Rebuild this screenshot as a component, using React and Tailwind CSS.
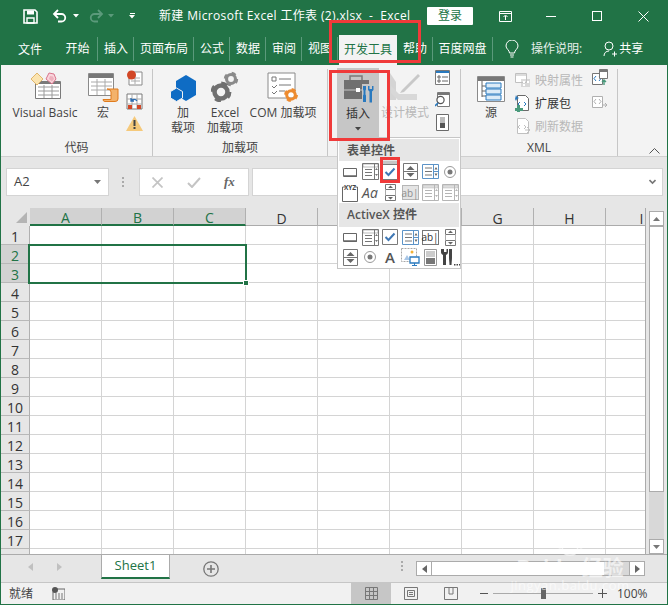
const columns = ["A", "B", "C", "D", "E", "F", "G", "H", "I"];
const rows = Array.from({ length: 18 }, (_, i) => i + 1);

const tabs = [
  ["开始", "w-[42px] pl-[2px]"],
  ["插入", "w-[36px] pl-[1px]"],
  ["页面布局", "w-[60px] pl-[1px]"],
  ["公式", "w-[36px] pl-[1px]"],
  ["数据", "w-[36px] pl-[1px]"],
  ["审阅", "w-[36px] pl-[1px]"],
  ["视图", "w-[36px] pl-[1px]"],
];

function Svg({ w, h, children, className }) {
  return (
    <svg width={w} height={h} viewBox={`0 0 ${w} ${h}`} fill="none" className={`block shrink-0 ${className || ""}`}>
      {children}
    </svg>
  );
}

// title bar
function SaveIcon() {
  return (
    <Svg w={15} h={15}>
      <path d="M1 1h11l2 2v11H1z" stroke="#fff" strokeWidth="1.6" />
      <path d="M4 1.500h7v4H4z" fill="#fff" />
      <path d="M4 9h7v5H4z" stroke="#fff" strokeWidth="1.400" />
    </Svg>
  );
}
function UndoIcon({ color, flip }) {
  return (
    <Svg w={15} h={14} className={flip ? "-scale-x-100" : ""}>
      <path d="M2 5h7.500a3.700 3.700 0 0 1 0 7.500H6" stroke={color} strokeWidth="1.800" />
      <path d="M6 1L2 5l4 4" stroke={color} strokeWidth="1.800" />
    </Svg>
  );
}
function Caret({ color }) {
  return (
    <Svg w={6} h={4}>
      <path d="M0 0h6L3 3.500z" fill={color} />
    </Svg>
  );
}

// ribbon
function VbIcon() {
  return (
    <Svg w={31} h={30}>
      <path d="M5.500 9.500h25v17h-25z" fill="#fff" stroke="#7a7a7a" />
      <path d="M6 9h24v3H6z" fill="#7a7a7a" />
      <path d="M8 15h21M8 19h21M8 23h21M14 13v13M22 13v13" stroke="#9a9a9a" />
      <path d="M7 1l6 6-6 6-6-6z" fill="#fbe4b0" stroke="#e0b66c" />
      <path d="M19 1l5 1 2 5-4 5-6-5z" fill="#f9d5dc" stroke="#d9758c" />
      <path d="M20 4l3 .5 1 2.500-2 2.500-3-2.500z" fill="#eeb0bd" />
    </Svg>
  );
}
function MacroIcon() {
  return (
    <Svg w={31} h={29}>
      <path d="M.5.5h25v22H.5z" fill="#fff" stroke="#8a8a8a" />
      <path d="M1 1h24v4H1z" fill="#777" />
      <path d="M3 9h21M3 13h21M3 17h21M9 6v16M17 6v16" stroke="#aaa" />
      <path d="M19 16h11v10q0 2.500-3 2.500H17q-2 0-2-2h8V19q0-3-4-3z" fill="#f3b26b" stroke="#e07b1d" />
    </Svg>
  );
}
function SmallRecord() {
  return (
    <Svg w={17} h={16}>
      <path d="M3 2h13v13H3z" fill="#fff" stroke="#8a8a8a" />
      <path d="M5 8h9M5 11h9M9 5v9" stroke="#aaa" />
      <circle cx="5.500" cy="5" r="4.500" fill="#d24726" />
    </Svg>
  );
}
function SmallRelative() {
  return (
    <Svg w={17} h={17}>
      <path d="M1 1h15v15H1z" fill="#fff" stroke="#7a7a7a" />
      <path d="M1 6h15M1 11h15M6 1v15M11 1v15" stroke="#aaa" />
      <path d="M11 8a3.500 3.500 0 0 0-6 0M5 5v3h3" stroke="#2b6cb0" strokeWidth="1.300" />
      <path d="M2 12h4v4H2zM11 12h4v4h-4z" fill="#d24726" />
    </Svg>
  );
}
function SmallWarn() {
  return (
    <Svg w={17} h={15}>
      <path d="M8.500 0L17 15H0z" fill="#f5c97b" />
      <path d="M7.500 4h2v6h-2zM7.500 11h2v2h-2z" fill="#444" />
    </Svg>
  );
}
function AddinIcon() {
  return (
    <Svg w={27} h={27}>
      <path d="M16 0l10 6v14l-10 6-10-6V6z" fill="#0f6cc4" />
      <path d="M6.500 13l6 3.500v6.500l-6 3.500-6-3.500v-6.500z" fill="#0f6cc4" stroke="#f3f3f3" />
    </Svg>
  );
}
function Gear({ x, y, r, color }) {
  return (
    <g transform={`translate(${x} ${y})`}>
      <circle r={r * 0.72} stroke={color} strokeWidth={r * 0.5} />
      <circle r={r} stroke={color} strokeWidth={r * 0.32} strokeDasharray={`${r * 0.7} ${r * 0.87}`} />
    </g>
  );
}
function GearsIcon() {
  return (
    <Svg w={28} h={31}>
      <Gear x={20} y={8} r={6.200} color="#8a8a8a" />
      <Gear x={10} y={21} r={9} color="#707070" />
    </Svg>
  );
}
function ComIcon() {
  return (
    <Svg w={32} h={30}>
      <path d="M1 1h27v25H1z" fill="#fff" stroke="#8a8a8a" />
      <path d="M5 5h4v4H5z" stroke="#777" />
      <path d="M12 7h12M12 13h12M12 19h6" stroke="#777" />
      <path d="M5 14l2 2 3-3M5 20l2 2 3-3" stroke="#777" />
      <Gear x={24} y={23} r={6} color="#ed8b2f" />
    </Svg>
  );
}
function ToolboxIcon() {
  return (
    <Svg w={31} h={28}>
      <path d="M6 5V1h12v4" stroke="#7a7a7a" strokeWidth="1.500" />
      <path d="M0 5h25v19H0z" fill="#707070" />
      <path d="M0 15h25" stroke="#c6c6c6" />
      <path d="M12 13h4v4h-4z" fill="#fff" />
      <path d="M18 9h7v15h-7z" fill="#c6c6c6" />
      <path d="M19 11h3v3.500l-.5 1v4l.5 1v6.500h-3v-6.500l.5-1v-4l-.5-1z" fill="#2a7abf" />
      <path d="M24 11h1.500v3h2.500v-3h1.500v4l-1.500 1.500v11h-2.500v-11L24 15z" fill="#2a7abf" />
    </Svg>
  );
}
function DesignIcon() {
  return (
    <Svg w={32} h={30}>
      <path d="M1 1v27h6V10z" fill="#d4d4d4" />
      <path d="M2 21l7 7H28v-6H10L2 14z" fill="#d8d8d8" />
      <path d="M13 18L29 2l2 2-16 16-4 1z" fill="#c8c8c8" />
    </Svg>
  );
}
function SmallProps() {
  return (
    <Svg w={15} h={15}>
      <path d="M.5.5h14v14H.5z" fill="#fff" stroke="#7a7a7a" />
      <path d="M1 1h13v2H1z" fill="#2a7abf" />
      <path d="M3 6h2v2H3zM3 10h2v2H3z" stroke="#666" />
      <path d="M7 7h6M7 11h6" stroke="#666" />
    </Svg>
  );
}
function SmallView() {
  return (
    <Svg w={15} h={15}>
      <path d="M2.500.5h12v14h-12z" fill="#fff" stroke="#7a7a7a" />
      <path d="M3 1h11v2H3z" fill="#777" />
      <circle cx="5.500" cy="8" r="3.600" fill="#fff" stroke="#555" strokeWidth="1.200" />
      <path d="M3 11l-3 3" stroke="#2a7abf" strokeWidth="1.600" />
    </Svg>
  );
}
function SmallDialog() {
  return (
    <Svg w={15} h={17}>
      <path d="M1.500.5h12v16h-12z" fill="#fff" stroke="#6a6a6a" />
      <path d="M5 3h5v6H5z" fill="#bbb" />
      <path d="M5 9h5v5H5z" fill="#555" />
    </Svg>
  );
}
function SourceIcon() {
  return (
    <Svg w={28} h={26}>
      <path d="M.5.5h27v25H.5z" fill="#fff" stroke="#8a8a8a" />
      <path d="M1 1h26v4H1z" fill="#777" />
      <path d="M5 5v16M5 10h4M5 15h4M5 20h4" stroke="#666" />
      <path d="M9 7h15v5H9zM9 13h15v5H9zM9 19h15v5H9z" fill="#dcebf7" stroke="#2a7abf" />
    </Svg>
  );
}
function XmlSmall({ active, kind }) {
  const c = active ? "#6a6a6a" : "#c0c0c0";
  const b = active ? "#2a7abf" : "#c0c0c0";
  if (kind === "map")
    return (
      <Svg w={16} h={15}>
        <path d="M.5.5h11v9H.5z" fill="#fff" stroke={c} />
        <path d="M1 1h10v2H1zM6 6h9v8H6z" fill={c} opacity=".55" />
        <path d="M8 8h2v2H8zM12 8h2v2h-2zM8 11h2v2H8z" fill="#fff" />
      </Svg>
    );
  return (
    <Svg w={16} h={17}>
      <path d="M2.500.5h8l3 3v12h-11z" fill="#fff" stroke={c} />
      <path d="M5 7l-2 2 2 2M9 7l2 2-2 2" stroke={b} />
      {kind === "pack" && <path d="M2 10h3v3h3v3H5v1H2v-1H0v-3h2z" fill="#4a9a7c" />}
      {kind === "pack" && <path d="M1 0l1 2 2 1-2 1-1 2-1-2" fill="#2a7abf" />}
      {kind === "refresh" && <path d="M10 12h5M12 9l3 3-3 3" stroke={c} />}
    </Svg>
  );
}
function MapExportIcon({ dim }) {
  const c = dim ? "#b0b0b0" : "#777";
  return (
    <Svg w={16} h={17}>
      <path d="M.5 4.500h10v11H.5z" fill="#fff" stroke={c} />
      <path d="M4 7l-2 2.500 2 2.500M7 7l2 2.500L7 12" stroke={dim ? "#b0b0b0" : "#2a7abf"} />
      {dim ? (
        <path d="M10 13h5M13 11l2 2-2 2" stroke={c} />
      ) : (
        <>
          <path d="M7.500.5h8v9h-8z" fill="#fff" stroke={c} />
          <path d="M8 1h7v2H8z" fill={c} />
          <path d="M12 16v-5M10 13l2-2 2 2" stroke="#4a9a7c" strokeWidth="1.400" />
        </>
      )}
    </Svg>
  );
}

// form control glyphs
const CBtn = () => (
  <Svg w={16} h={16}>
    <path d="M1.500 4.500h13v8h-13z" fill="#fff" stroke="#666" />
    <path d="M2 12h13" stroke="#666" strokeWidth="1.500" />
  </Svg>
);
const CCombo = ({ dim }) => {
  const c = dim ? "#b5b5b5" : "#777";
  return (
    <Svg w={17} h={17}>
      <path d="M.5.5h16v16H.5z" fill="#fff" stroke={c} />
      <path d="M1 1h15v3H1z" fill={dim ? "#ddd" : "#fff"} stroke={c} strokeWidth=".5" />
      <path d="M12.500 1v15" stroke={c} />
      <path d="M3 6.500h7M3 9.500h7M3 12.500h7" stroke={c} />
      <path d="M13 7l1.500-2L16 7zM13 11l1.500 2 1.500-2z" fill={c} />
    </Svg>
  );
};
const CCheck = () => (
  <Svg w={16} h={16}>
    <path d="M.5.5h15v15H.5z" fill="#fff" stroke="#7a7a7a" />
    <path d="M3.500 8l3 3 6-6.500" stroke="#3f78b5" strokeWidth="2" />
  </Svg>
);
const CSpin = () => (
  <Svg w={15} h={17}>
    <path d="M.5.5h14v16H.5z" fill="#fff" stroke="#777" />
    <path d="M1 8.500h13" stroke="#777" />
    <path d="M3.500 7l4-4 4 4zM3.500 10l4 4 4-4z" fill="#666" />
  </Svg>
);
const CList = () => (
  <Svg w={17} h={15}>
    <path d="M.5.5h16v14H.5z" fill="#fff" stroke="#5c93c7" />
    <path d="M3 4h7M3 7.500h7M3 11h7" stroke="#777" />
    <path d="M11.500 1v13M12 7.500h4" stroke="#5c93c7" />
    <path d="M12.500 5.500L14 3l1.500 2.500zM12.500 9.500L14 12l1.500-2.500z" fill="#666" />
  </Svg>
);
const CRadio = () => (
  <Svg w={14} h={14}>
    <circle cx="7" cy="7" r="5.500" fill="#fff" stroke="#999" />
    <circle cx="7" cy="7" r="2.500" fill="#777" />
  </Svg>
);
const CGroup = () => (
  <Svg w={16} h={18}>
    <path d="M3 3H.5v14.500h15V3H13" stroke="#666" />
    <text x="8" y="5.500" textAnchor="middle" fontSize="6.500" fontWeight="700" fill="#444">XYZ</text>
  </Svg>
);
const CLabel = () => <span className="text-[14px] italic leading-[16px] text-[#555]">Aa</span>;
const CScroll = () => (
  <Svg w={13} h={17}>
    <path d="M1.500.5h10v5h-10zM1.500 11.500h10v5h-10z" fill="#fff" stroke="#777" />
    <path d="M1.500 5.500v6M11.500 5.500v6" stroke="#aaa" />
    <path d="M4 4l2.500-2.500L9 4zM4 13l2.500 2.500L9 13z" fill="#666" />
  </Svg>
);
const CText = ({ dim }) => (
  <div className={`flex h-[15px] w-[17px] items-center justify-center border text-[10px] leading-[12px] ${dim ? "border-[#b5b5b5] bg-[#e4e4e4] text-[#8f8f8f]" : "border-[#777] bg-white text-[#333]"}`}>
    ab|
  </div>
);
const CImage = () => (
  <Svg w={19} h={18}>
    <path d="M.5.5h15v13H.5z" fill="#fff" stroke="#a8a8a8" strokeDasharray="2 1" />
    <circle cx="11" cy="4" r="1.500" fill="#f2b134" />
    <path d="M3 12l3-5 3 5z" fill="#a9c6e6" />
    <path d="M9 9h9v6H9z" fill="#fff" stroke="#2a7abf" strokeWidth="1.300" />
    <path d="M13.500 15v2M11 17.500h5" stroke="#2a7abf" />
  </Svg>
);
const CToggle = () => (
  <Svg w={15} h={17}>
    <path d="M1.500.5h12v16h-12z" fill="#fff" stroke="#999" />
    <path d="M3 2h9v6H3z" fill="#ccc" />
    <path d="M3 9h9v6H3z" fill="#777" />
  </Svg>
);
const CTools = () => (
  <Svg w={19} h={17}>
    <path d="M2 6v10h3V6a3 3 0 0 0 2-3V0H5.500v3H3V0H0v3a3 3 0 0 0 2 3z" fill="#444" />
    <path d="M8 0h3v9l-.5 7h-2L8 9z" fill="#444" />
    <path d="M13 15h1.500v1.500H13zM15.500 15H17v1.500h-1.500zM18 15h1v1.500h-1z" fill="#444" />
  </Svg>
);

const formCells = [<CBtn />, <CCombo />, <CCheck />, <CSpin />, <CList />, <CRadio />, <CGroup />, <CLabel />, <CScroll />, <CText dim />, <CCombo dim />, <CCombo dim />];
const activeCells = [
  <CBtn />, <CCombo />, <CCheck />, <CList />, <CText />, <CScroll />,
  <CSpin />, <CRadio />, <span className="text-[15px] font-semibold leading-[18px] text-[#555]">A</span>, <CImage />, <CToggle />, <CTools />,
];

function ControlGrid({ cells, highlight, rowClass }) {
  return (
    <div className="grid grid-cols-[repeat(6,20px)] px-[1px]">
      {cells.map((icon, i) => (
        <div key={i} className={`flex items-center justify-center ${rowClass} ${highlight === i ? "bg-[#c6c6c6]" : ""}`}>
          {icon}
        </div>
      ))}
    </div>
  );
}

function BigButton({ icon, lines, className, dim }) {
  return (
    <div className={`flex flex-col items-center ${className || ""}`}>
      <div className="flex h-[33px] items-end">{icon}</div>
      <div className={`mt-[3px] text-center text-[12px] leading-[15px] whitespace-nowrap ${dim ? "text-[#b8b8b8]" : "text-[#444]"}`}>
        {lines.map((l) => (
          <div key={l}>{l}</div>
        ))}
      </div>
    </div>
  );
}

function Group({ label, className, children }) {
  return (
    <div className={`flex h-[87px] flex-col border-r border-[#c6c6c6] ${className}`}>
      <div className="flex h-[71px] items-start">{children}</div>
      <div className="text-center text-[12px] leading-[15px] text-[#444]">{label}</div>
    </div>
  );
}

function XmlRow({ kind, active, children }) {
  return (
    <div className={`flex h-[23px] items-center gap-[4px] text-[12px] ${active ? "text-[#333]" : "text-[#b8b8b8]"}`}>
      <XmlSmall kind={kind} active={active} />
      {children}
    </div>
  );
}

function Box({ className }) {
  return <div className={`pointer-events-none absolute border-[3px] border-[#f03a3a] ${className}`} />;
}

export default function App() {
  return (
    <div className="relative flex h-[605px] w-[668px] flex-col overflow-hidden border-x border-b border-[#217346] bg-[#e6e6e6] font-['Open_Sans','Noto_Sans_CJK_SC',sans-serif] text-[#444]">
      {/* title bar */}
      <div className="flex h-[32px] shrink-0 items-center bg-[#217346] text-white">
        <div className="flex w-[158px] items-center pl-[22px]">
          <SaveIcon />
          <div className="ml-[14px]"><UndoIcon color="#fff" /></div>
          <div className="ml-[6px]"><Caret color="#fff" /></div>
          <div className="ml-[10px]"><UndoIcon color="#5b9a7b" flip /></div>
          <div className="ml-[4px]"><Caret color="#5b9a7b" /></div>
          <div className="ml-[15px] flex flex-col items-center gap-[1px]">
            <div className="h-[1px] w-[5px] bg-white" />
            <Caret color="#fff" />
          </div>
        </div>
        <div className="w-[268px] text-[12px] tracking-[0.35px] whitespace-pre">新建 Microsoft Excel 工作表 (2).xlsx  -  Excel</div>
        <div className="flex h-[18px] w-[46px] items-center justify-center rounded-[1px] bg-white text-[12px] text-[#217346]">登录</div>
        <div className="ml-[9px] flex w-[46px] justify-center">
          <Svg w={13} h={11}>
            <path d="M.5.5h12v10H.5z" stroke="#fff" />
            <path d="M1 2.500h11M6.500 9V5M4.500 6l2-2 2 2" stroke="#fff" />
          </Svg>
        </div>
        <div className="flex w-[46px] justify-center"><div className="h-[1px] w-[10px] bg-white" /></div>
        <div className="flex w-[46px] justify-center"><div className="h-[10px] w-[10px] border border-white" /></div>
        <div className="flex w-[46px] justify-center">
          <Svg w={11} h={11}><path d="M.5.5l10 10M10.500.5l-10 10" stroke="#fff" /></Svg>
        </div>
      </div>

      {/* ribbon tabs */}
      <div className="flex h-[33px] shrink-0 items-end bg-[#217346] text-[12px] text-white">
        <div className="flex h-[30px] w-[55px] items-center justify-center pl-[3px]">文件</div>
        {tabs.map(([name, w]) => (
          <div key={name} className={`flex h-[24px] items-center justify-center self-center border-r border-[#5b9a7b] ${w}`}>{name}</div>
        ))}
        <div className="ml-[1px] flex h-[30px] w-[58px] items-center justify-center bg-[#f3f3f3] text-[#217346]">开发工具</div>
        <div className="flex h-[24px] w-[36px] items-center justify-center self-center border-r border-[#5b9a7b] pl-[1px]">帮助</div>
        <div className="flex h-[24px] w-[60px] items-center justify-center self-center border-r border-[#5b9a7b]">百度网盘</div>
        <div className="ml-[12px] self-center">
          <Svg w={14} h={18}>
            <path d="M4.500 13c0-3-3.500-4-3.500-7a6 6 0 0 1 12 0c0 3-3.500 4-3.500 7z" stroke="#fff" />
            <path d="M5 15h4M5.500 17h3" stroke="#fff" />
          </Svg>
        </div>
        <div className="ml-[12px] self-center text-[#e4efe9]">操作说明:</div>
        <div className="ml-[21px] flex items-center gap-[2px] self-center">
          <Svg w={14} h={16}>
            <circle cx="6" cy="5" r="4" stroke="#fff" />
            <path d="M1 15c0-3 2-5 5-5M9 13h5M11.500 10.500v5" stroke="#fff" />
          </Svg>
          共享
        </div>
      </div>

      {/* ribbon */}
      <div className="flex h-[92px] shrink-0 items-start border-b border-[#d0d0d0] bg-[#f3f3f3] pt-[4px]">
        <Group label="代码" className="w-[152px]">
          <BigButton className="ml-[10px] w-[68px]" icon={<VbIcon />} lines={["Visual Basic"]} />
          <BigButton className="ml-[8px] w-[32px]" icon={<MacroIcon />} lines={["宏"]} />
          <div className="ml-[7px] flex h-[62px] flex-col justify-between pt-[1px]">
            <SmallRecord />
            <SmallRelative />
            <SmallWarn />
          </div>
        </Group>
        <Group label="加载项" className="w-[175px]">
          <BigButton className="ml-[15px] w-[30px]" icon={<AddinIcon />} lines={["加", "载项"]} />
          <BigButton className="ml-[9px] w-[36px]" icon={<GearsIcon />} lines={["Excel", "加载项"]} />
          <BigButton className="ml-[4px] w-[72px]" icon={<ComIcon />} lines={["COM 加载项"]} />
        </Group>
        <Group label="" className="w-[133px]">
          <div className="ml-[9px] -mt-[1px] flex h-[70px] w-[42px] flex-col items-center bg-[#c6c6c6]">
            <div className="flex h-[35px] items-end pl-[3px]"><ToolboxIcon /></div>
            <div className="mt-[3px] text-[12px] leading-[15px] text-[#333]">插入</div>
            <div className="mt-[6px]"><Caret color="#444" /></div>
          </div>
          <BigButton className="ml-[1px] w-[50px]" dim icon={<DesignIcon />} lines={["设计模式"]} />
          <div className="ml-[5px] flex h-[62px] flex-col justify-between pt-[1px]">
            <SmallProps />
            <SmallView />
            <SmallDialog />
          </div>
        </Group>
        <Group label="XML" className="w-[157px]">
          <BigButton className="ml-[16px] w-[28px]" icon={<SourceIcon />} lines={["源"]} />
          <div className="ml-[10px] flex flex-col">
            <XmlRow kind="map">映射属性</XmlRow>
            <XmlRow kind="pack" active>扩展包</XmlRow>
            <XmlRow kind="refresh">刷新数据</XmlRow>
          </div>
          <div className="ml-[9px] flex flex-col gap-[6px]">
            <MapExportIcon />
            <MapExportIcon dim />
          </div>
        </Group>
        <div className="ml-auto mr-[7px] mt-[79px]">
          <Svg w={11} h={6}><path d="M.5 5.500l5-5 5 5" stroke="#555" /></Svg>
        </div>
      </div>

      {/* formula bar */}
      <div className="flex h-[51px] shrink-0 items-center pb-[1px] pl-[5px]">
        <div className="flex h-[28px] w-[103px] items-center justify-between border border-[#d4d4d4] bg-white pl-[7px] pr-[7px] text-[13px]">
          A2
          <Svg w={7} h={4}><path d="M0 0h7L3.500 4z" fill="#777" /></Svg>
        </div>
        <div className="ml-[13px] flex w-[3px] flex-col gap-[2px]">
          <div className="h-[2px] w-[2px] bg-[#aaa]" />
          <div className="h-[2px] w-[2px] bg-[#aaa]" />
          <div className="h-[2px] w-[2px] bg-[#aaa]" />
        </div>
        <div className="ml-[14px] flex h-[28px] w-[110px] items-center border border-[#d4d4d4] bg-white">
          <div className="ml-[12px]"><Svg w={11} h={11}><path d="M.5.5l10 10M10.500.5l-10 10" stroke="#c4c4c4" strokeWidth="1.700" /></Svg></div>
          <div className="ml-[24px]"><Svg w={14} h={11}><path d="M1 6l4 4 8-9" stroke="#c4c4c4" strokeWidth="2" /></Svg></div>
          <div className="ml-[23px] font-['Liberation_Serif',serif] text-[13px] font-bold italic text-[#666]">fx</div>
        </div>
        <div className="ml-[3px] flex h-[28px] w-[411px] items-center justify-end border border-[#d4d4d4] bg-white pr-[6px]">
          <Svg w={7} h={6}><path d="M.5 1l3 3 3-3" stroke="#777" strokeWidth="1.600" /></Svg>
        </div>
      </div>

      {/* sheet */}
      <div className="flex h-[346px] shrink-0">
        <div className="relative h-[346px] w-[645px] overflow-hidden border-r border-[#ababab] bg-white">
          <div className="flex h-[18px] w-[677px] bg-[#e6e6e6]">
            <div className="flex h-[18px] w-[29px] items-end justify-end pb-[3px] pr-[3px]">
              <Svg w={11} h={11}><path d="M11 0v11H0z" fill="#b4b4b4" /></Svg>
            </div>
            {columns.map((c, i) => (
              <div
                key={c}
                className={`flex h-[18px] w-[72px] items-center justify-center border-r pt-[3px] text-[14px] leading-[13px] ${
                  i < 3 ? "border-b-2 border-r-[#b0b0b0] border-b-[#217346] bg-[#d2d2d2] text-[#217346]" : "border-b border-r-[#b0b0b0] border-b-[#ababab] text-[#333]"
                }`}
              >
                {c}
              </div>
            ))}
          </div>
          {rows.map((r) => (
            <div key={r} className="flex h-[19px] w-[677px]">
              <div className={`flex h-[19px] w-[29px] items-center justify-center border-b border-r border-b-[#b8b8b8] border-r-[#b0b0b0] pt-[3px] text-[14px] leading-[14px] ${r === 2 || r === 3 ? "bg-[#d2d2d2] text-[#217346]" : "bg-[#e6e6e6] text-[#333]"}`}>
                {r < 18 ? r : ""}
              </div>
              {columns.map((c) => (
                <div key={c} className="h-[19px] w-[72px] border-b border-r border-[#d4d4d4]" />
              ))}
            </div>
          ))}
          {/* selection */}
          <div className="absolute left-[27px] top-[36px] h-[40px] w-[219px] border-2 border-[#217346]">
            <div className="absolute -bottom-[4px] -right-[4px] h-[6px] w-[6px] border border-white bg-[#217346]" />
          </div>
        </div>
        {/* vertical scrollbar */}
        <div className="ml-[3px] flex h-[346px] w-[15px] flex-col">
          <div className="mt-[3px] flex h-[15px] shrink-0 items-center justify-center border border-[#ababab] bg-white">
            <Svg w={7} h={4}><path d="M3.500 0L7 4H0z" fill="#777" /></Svg>
          </div>
          <div className="flex flex-1 flex-col bg-[#d8d8d8]">
            <div className="h-[266px] border border-[#ababab] bg-white" />
          </div>
          <div className="flex h-[15px] shrink-0 items-center justify-center border border-[#ababab] bg-white">
            <Svg w={7} h={4}><path d="M0 0h7L3.500 4z" fill="#777" /></Svg>
          </div>
        </div>
      </div>

      {/* sheet tabs */}
      <div className="flex h-[28px] shrink-0 border-t border-[#ababab] bg-[#e6e6e6]">
        <div className="ml-[27px] mt-[8px]"><Svg w={5} h={8}><path d="M5 0v8L0 4z" fill="#c0c0c0" /></Svg></div>
        <div className="ml-[24px] mt-[8px]"><Svg w={5} h={8}><path d="M0 0v8l5-4z" fill="#c0c0c0" /></Svg></div>
        <div className="ml-[39px] flex h-[24px] w-[69px] items-center justify-center border-x border-b-2 border-x-[#ababab] border-b-[#217346] bg-white text-[13px] text-[#217346]">Sheet1</div>
        <div className="ml-[33px] mt-[6px]">
          <Svg w={16} h={16}>
            <circle cx="8" cy="8" r="7.200" stroke="#777" strokeWidth="1.300" />
            <path d="M8 4v8M4 8h8" stroke="#777" strokeWidth="1.600" />
          </Svg>
        </div>
        <div className="ml-[182px] mt-[6px] flex w-[3px] flex-col gap-[2px]">
          <div className="h-[2px] w-[2px] bg-[#aaa]" />
          <div className="h-[2px] w-[2px] bg-[#aaa]" />
          <div className="h-[2px] w-[2px] bg-[#aaa]" />
        </div>
        <div className="ml-[12px] mt-[6px] flex h-[15px] w-[229px] border border-[#ababab] bg-[#d8d8d8]">
          <div className="flex w-[15px] items-center justify-center border-r border-[#ababab] bg-white"><Svg w={5} h={8}><path d="M5 0v8L0 4z" fill="#666" /></Svg></div>
          <div className="w-[172px] bg-white" />
          <div className="ml-auto flex w-[15px] items-center justify-center border-l border-[#ababab] bg-white"><Svg w={5} h={8}><path d="M0 0v8l5-4z" fill="#666" /></Svg></div>
        </div>
      </div>

      {/* status bar */}
      <div className="flex flex-1 items-center border-t border-[#c6c6c6] bg-[#f1f1f1] text-[12px]">
        <div className="ml-[8px] w-[24px]">就绪</div>
        <div className="ml-[19px]">
          <Svg w={13} h={13}>
            <path d="M3 2h10v11H1V5" stroke="#666" />
            <circle cx="3" cy="3" r="3" fill="#555" />
            <path d="M3 7h8M3 9h8M3 11h8" stroke="#777" strokeDasharray="2 1" />
          </Svg>
        </div>
        <div className="ml-[286px] flex h-full w-[40px] items-center justify-center bg-[#c6c6c6]">
          <Svg w={13} h={13}><path d="M.5.5h12v12H.5zM4.500 1v12M8.500 1v12M1 4.500h12M1 8.500h12" stroke="#777" /></Svg>
        </div>
        <div className="flex w-[40px] justify-center">
          <Svg w={14} h={13}><path d="M.5.5h13v12H.5z" stroke="#777" /><path d="M3.500 3.500h7v6h-7zM5 5.500h4M5 7.500h4" stroke="#777" /></Svg>
        </div>
        <div className="flex w-[40px] justify-center">
          <Svg w={14} h={13}><path d="M.5.5h13v12H.5zM5 1v6h4V1" stroke="#777" /></Svg>
        </div>
        <div className="ml-[9px] h-[1px] w-[8px] bg-[#555]" />
        <div className="relative ml-[5px] h-[1px] w-[100px] bg-[#aaa]">
          <div className="absolute left-[48px] -top-[5px] h-[11px] w-[5px] bg-[#666]" />
        </div>
        <div className="ml-[5px]"><Svg w={9} h={9}><path d="M4.500 0v9M0 4.500h9" stroke="#555" /></Svg></div>
        <div className="ml-[10px] text-[12px] text-[#444]">100%</div>
      </div>

      {/* insert control dropdown */}
      <div className="absolute left-[336px] top-[137px] z-10 w-[124px] border border-[#c6c6c6] bg-white p-[1px]">
        <div className="flex h-[22px] items-center bg-[#e6e6e6] pl-[8px] pt-[1px] text-[12px] font-semibold text-[#555]">表单控件</div>
        <ControlGrid cells={formCells} highlight={2} rowClass="h-[21px]" />
        <div className="flex h-[24px] items-center bg-[#e6e6e6] pl-[8px] text-[12px] font-semibold text-[#555]">ActiveX 控件</div>
        <ControlGrid cells={activeCells} rowClass="h-[20px]" />
      </div>

      {/* red annotations */}
      <Box className="left-[328px] top-[20px] z-20 h-[43px] w-[92px]" />
      <Box className="left-[328px] top-[70px] z-20 h-[71px] w-[61px]" />
      <Box className="left-[379px] top-[157px] z-20 h-[26px] w-[20px]" />

      {/* watermark */}
      <div className="pointer-events-none absolute left-[510px] top-[532px] z-30 flex w-[118px] flex-col items-center text-white/60">
        <Svg w={36} h={24}>
          <ellipse cx="18" cy="18" rx="8" ry="5" stroke="#fff" strokeOpacity=".6" strokeWidth="1.500" />
          <ellipse cx="8" cy="12" rx="3" ry="4" stroke="#fff" strokeOpacity=".6" strokeWidth="1.500" />
          <ellipse cx="14" cy="5" rx="3" ry="4" stroke="#fff" strokeOpacity=".6" strokeWidth="1.500" />
          <ellipse cx="23" cy="5" rx="3" ry="4" stroke="#fff" strokeOpacity=".6" strokeWidth="1.500" />
          <ellipse cx="29" cy="12" rx="3" ry="4" stroke="#fff" strokeOpacity=".6" strokeWidth="1.500" />
        </Svg>
        <div className="whitespace-nowrap text-[21px] font-bold leading-[22px]">Baidu 经验</div>
        <div className="whitespace-nowrap text-[13px] leading-[15px] tracking-[0.5px]">jingyan.baidu.com</div>
      </div>
    </div>
  );
}
